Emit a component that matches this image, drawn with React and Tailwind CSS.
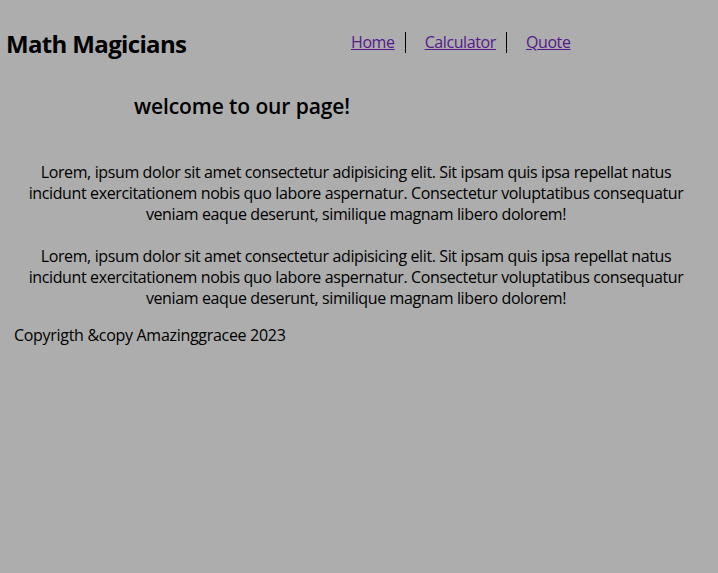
import React from 'react';

const links = ['Home', 'Calculator', 'Quote'];

function Header() {
    return (
        <header className="flex items-center h-[88px] pl-[6px]">
            <h1 className="text-[24px] font-bold leading-none w-[345px] tracking-[-0.65px]">Math Magicians</h1>
            <nav className="flex items-center -mt-[4px] tracking-[-0.4px]">
                {links.map((l, i) => (
                    <a
                        key={l}
                        href="#"
                        className={`text-[16px] underline text-[#551a8b] leading-[21px] ${i < links.length - 1 ? 'border-r border-black pr-[10px] mr-[19px]' : ''}`}
                    >
                        {l}
                    </a>
                ))}
            </nav>
        </header>
    );
}

function App() {
    const lorem =
        'Lorem, ipsum dolor sit amet consectetur adipisicing elit. Sit ipsam quis ipsa repellat natus incidunt exercitationem nobis quo labore aspernatur. Consectetur voluptatibus consequatur veniam eaque deserunt, similique magnam libero dolorem!';
    return (
        <div className="min-h-[573px] bg-[#adadad] text-black font-['Open_Sans',sans-serif] tracking-[-0.3px]">
            <Header />
            <h2 className="text-[21px] font-semibold pl-[134px] leading-[28px] mt-[4px] tracking-[-0.1px]">welcome to our page!</h2>
            <div className="pl-[28px] pr-[34px] pt-[42px] text-center text-[16px] leading-[21px] tracking-[-0.38px]">
                <p className="mb-[21px]">{lorem}</p>
                <p>{lorem}</p>
            </div>
            <p className="pl-[14px] mt-[16px] text-[16px] leading-[21px]">Copyrigth &amp;copy Amazinggracee 2023</p>
        </div>
    );
}

export default App;
